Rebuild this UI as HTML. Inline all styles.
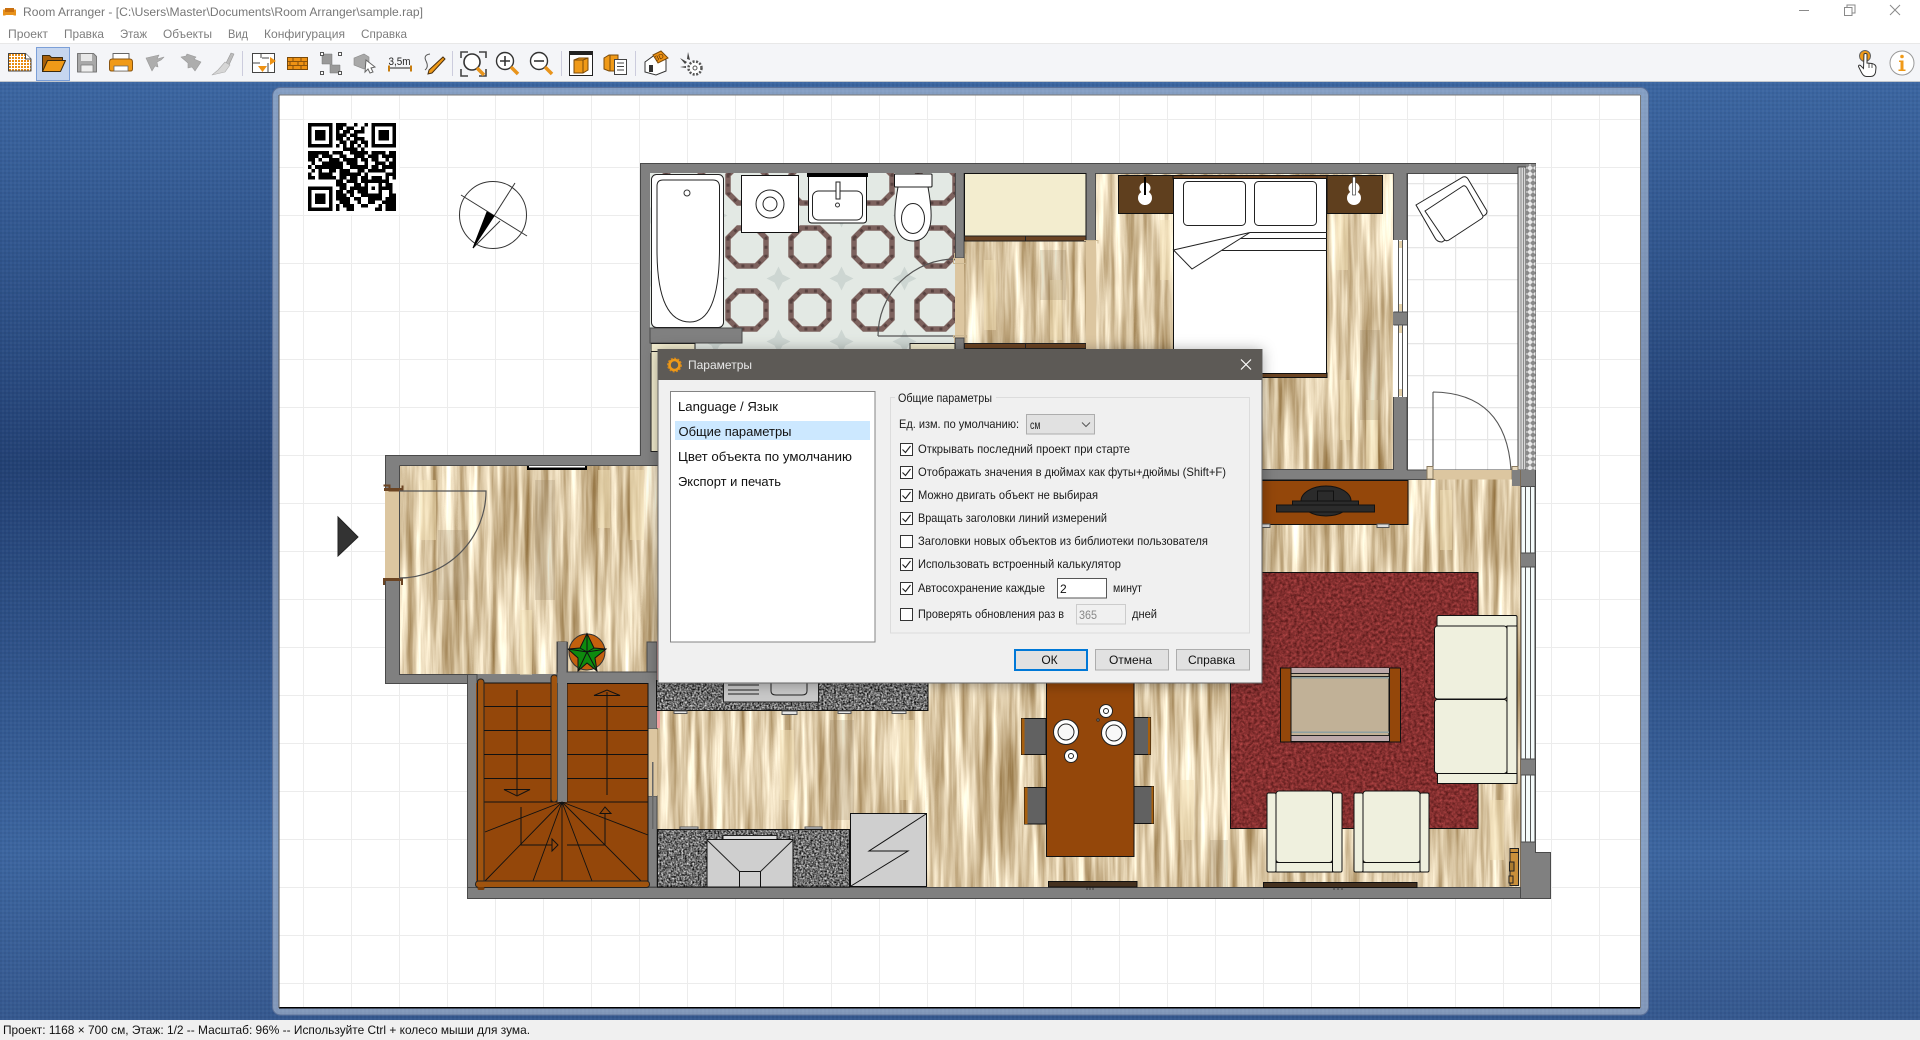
<!DOCTYPE html>
<html lang="ru"><head><meta charset="utf-8"><title>Room Arranger</title>
<style>
html,body{margin:0;padding:0;background:#fff;width:1920px;height:1040px;overflow:hidden}
svg{display:block}
text{font-family:"Liberation Sans","Noto Sans CJK JP",sans-serif;font-size:12px}
</style></head><body>
<svg xmlns="http://www.w3.org/2000/svg" width="1920" height="1040" viewBox="0 0 1920 1040">
<defs>
<linearGradient id="bg" gradientUnits="userSpaceOnUse" x1="0" y1="81" x2="0" y2="1020">
<stop offset="0" stop-color="#3c66a1"/><stop offset=".409" stop-color="#234174"/><stop offset=".821" stop-color="#3c659f"/><stop offset="1" stop-color="#36598f"/></linearGradient>
<pattern id="dots" width="4" height="4" patternUnits="userSpaceOnUse"><rect width="2" height="2" fill="#000" opacity=".05"/><rect x="2" y="2" width="2" height="2" fill="#fff" opacity=".03"/></pattern>
<pattern id="grid" x="303" y="119" width="48" height="48" patternUnits="userSpaceOnUse"><path d="M0 0H48M0 0V48" stroke="#ececec" stroke-width="2" fill="none"/></pattern>
<pattern id="btile" x="1423" y="183" width="32" height="32" patternUnits="userSpaceOnUse"><rect width="32" height="32" fill="#fff"/><path d="M0 0H32M0 0V32" stroke="#e6e6e6" stroke-width="2.4" fill="none"/></pattern>
<pattern id="otile" x="715.5" y="215.5" width="63" height="63" patternUnits="userSpaceOnUse"><rect width="63" height="63" fill="#e3e9e4"/>
<path d="M0 -12L4 -4L12 0L4 4L0 12L-4 4L-12 0L-4 -4Z" fill="#bcc6c2" opacity=".55"/><path d="M63 -12L67 -4L75 0L67 4L63 12L59 4L51 0L59 -4Z" fill="#bcc6c2" opacity=".55"/><path d="M0 51L4 59L12 63L4 67L0 75L-4 67L-12 63L-4 59Z" fill="#bcc6c2" opacity=".55"/><path d="M63 51L67 59L75 63L67 67L63 75L59 67L51 63L59 59Z" fill="#bcc6c2" opacity=".55"/>
<path d="M12.500 22.500L22.500 12.500H40.500L50.500 22.500V40.500L40.500 50.500H22.500L12.500 40.500Z" fill="none" stroke="#7d625e" stroke-width="5.500"/>
<path d="M12.500 22.500L22.500 12.500H40.500L50.500 22.500V40.500L40.500 50.500H22.500L12.500 40.500Z" fill="none" stroke="#4f3a38" stroke-width="3" stroke-dasharray="3 6" opacity=".8"/></pattern>
<pattern id="hatch" width="6" height="6" patternUnits="userSpaceOnUse"><rect width="6" height="6" fill="#e8e8e8"/><path d="M0 3L3 0L6 3L3 6Z" fill="#8a8a8a"/></pattern>
<pattern id="ordots" width="3" height="3" patternUnits="userSpaceOnUse"><rect width="3" height="3" fill="#fff"/><rect width="2" height="2" fill="#e88b10"/></pattern>
<filter id="wood" filterUnits="userSpaceOnUse" x="380" y="160" width="1160" height="740" color-interpolation-filters="sRGB">
<feTurbulence type="fractalNoise" baseFrequency="0.13 0.007" numOctaves="4" seed="7"/>
<feColorMatrix type="matrix" values=".72 0 0 0 .5  .85 0 0 0 .36  1.0 0 0 0 .15  0 0 0 0 1"/></filter>
<filter id="gran" filterUnits="userSpaceOnUse" x="650" y="680" width="290" height="215" color-interpolation-filters="sRGB">
<feTurbulence type="fractalNoise" baseFrequency=".55" numOctaves="2" seed="3"/>
<feColorMatrix type="matrix" values="1.4 0 0 0 -.27  1.4 0 0 0 -.27  1.4 0 0 0 -.27  0 0 0 0 1"/></filter>
<filter id="carp" filterUnits="userSpaceOnUse" x="1225" y="565" width="260" height="270" color-interpolation-filters="sRGB">
<feTurbulence type="fractalNoise" baseFrequency=".35" numOctaves="3" seed="5"/>
<feColorMatrix type="matrix" values=".5 0 0 0 .27  .25 0 0 0 .06  .25 0 0 0 .06  0 0 0 0 1"/></filter>
<filter id="shad" x="-10%" y="-10%" width="120%" height="120%"><feDropShadow dx="0" dy="1" stdDeviation="7" flood-color="#000" flood-opacity=".33"/></filter>
<clipPath id="wclip"><rect x="399" y="465" width="261" height="209"/><rect x="657" y="470" width="863" height="417"/><rect x="1096" y="173" width="297" height="300"/><rect x="964" y="236" width="132" height="110"/></clipPath>
</defs>

<!-- chrome -->
<rect width="1920" height="1040" fill="#fff"/>
<rect y="44" width="1920" height="38" fill="#f4f5f8"/><rect y="43" width="1920" height="1" fill="#e8e8e8"/><rect y="81" width="1920" height="1" fill="#c2c6cc"/>
<path d="M4 10h11v5H4z M3 9.500h2.500v6H3zM13.500 9.500h2.500v6h-2.500z" fill="#e8911a"/><rect x="5" y="8" width="9" height="4" fill="#c96f0e"/>
<text x="23" y="16" fill="#777" textLength="400" lengthAdjust="spacingAndGlyphs">Room Arranger - [C:\Users\Master\Documents\Room Arranger\sample.rap]</text>
<g fill="#7d7d7d">
<text x="8" y="38" textLength="40" lengthAdjust="spacingAndGlyphs">Проект</text>
<text x="64" y="38" textLength="40" lengthAdjust="spacingAndGlyphs">Правка</text>
<text x="120" y="38" textLength="27" lengthAdjust="spacingAndGlyphs">Этаж</text>
<text x="163" y="38" textLength="49" lengthAdjust="spacingAndGlyphs">Объекты</text>
<text x="228" y="38" textLength="20" lengthAdjust="spacingAndGlyphs">Вид</text>
<text x="264" y="38" textLength="81" lengthAdjust="spacingAndGlyphs">Конфигурация</text>
<text x="361" y="38" textLength="46" lengthAdjust="spacingAndGlyphs">Справка</text>
</g>
<g stroke="#8a8a8a" fill="none" stroke-width="1"><path d="M1799 10.500h10"/><path d="M1844.500 7.500h7.500v8h-7.500z"/><path d="M1847 7.500v-2.500h8v8h-3"/><path d="M1890 5l10 10M1900 5l-10 10"/></g>

<!-- toolbar icons -->
<rect x="36.500" y="47.500" width="33" height="33" fill="#c6d6ef" stroke="#7b9fd8"/>
<g stroke-linejoin="round">
<path d="M8.500 53.500h17l5.500 5.500v12h-22.500z" fill="url(#ordots)" stroke="#444"/><path d="M25.500 53.500v5.500h5.500" fill="#fff" stroke="#444"/>
<path d="M42.500 71.500v-16h7l2 2h11v3h-15l-4 11z" fill="#a85f08" stroke="#3a2a10"/><path d="M42.500 71.500l5-11h18l-5 11z" fill="#f09a18" stroke="#3a2a10"/>
<path d="M77.500 53.500h16l3 3v15.500h-19z" fill="#a8a8a8" stroke="#777"/><rect x="81" y="54" width="11" height="7" fill="#e8e8e8"/><rect x="81" y="65" width="12" height="7" fill="#eee" stroke="#777" stroke-width=".7"/>
<path d="M113 53.500h16v7h-16z" fill="#fff" stroke="#666"/><path d="M109.500 62q0-3 3-3h17q3 0 3 3v7q0 2-2 2h-19q-2 0-2-2z" fill="#f09a18" stroke="#8a5510"/><rect x="114" y="66" width="14" height="5" fill="#fff" stroke="#666" stroke-width=".8"/>
<path d="M146 58l13-3-2 4 7-2-3 3-4 2 1 5-3-1-3 5z" fill="#adadad" stroke="#999" stroke-width=".6"/>
<path d="M201 62l-6 9-3-4-4 1 0-5-7-6 5-1 1-2 9 3-2 2z" fill="#adadad" stroke="#999" stroke-width=".6"/>
<path d="M231 53l3 1-5 11-3-2z" fill="#bcbcbc" stroke="#999" stroke-width=".6"/><path d="M225 62l5 3-5 7-13 3 6-5z" fill="#d6d6d6" stroke="#aaa" stroke-width=".6"/>
</g>
<rect x="242" y="51" width="1" height="25" fill="#ccd"/>
<rect x="252.500" y="53.500" width="22" height="19" fill="#fff" stroke="#444"/><path d="M261 53v5M252 63h8M268 63v9M262 58h7" stroke="#444" fill="none"/><path d="M270 57l6 4-6 4z" fill="#ee9214"/><path d="M258 66h9l-4.500 6z" fill="#ee9214"/>
<rect x="287.500" y="57.500" width="20" height="12" fill="#ee9214" stroke="#7a4a0a"/><path d="M287 61.500h20M287 65.500h20M293 58v3M301 58v3M290 62v3M298 62v3M304 62v3M293 66v3M301 66v3" stroke="#6b3f08" fill="none" stroke-width=".8"/>
<path d="M322 54h10v11h8v8h-10v-9h-8z" fill="#999" stroke="#777" stroke-width=".5"/><g fill="#fff" stroke="#555"><rect x="320.500" y="52.500" width="3" height="3"/><rect x="338.500" y="52.500" width="3" height="3"/><rect x="320.500" y="71.500" width="3" height="3"/><rect x="338.500" y="71.500" width="3" height="3"/></g>
<path d="M354 58l10-4 5 3v9l-5 3-10-4z" fill="#a8a8a8" stroke="#888" stroke-width=".6"/><path d="M366 60l9 7-4 1 2 4-3 1-2-4-3 3z" fill="#fff" stroke="#666"/>
<text x="388.500" y="65" style="font-size:11px" fill="#222" textLength="22" lengthAdjust="spacingAndGlyphs">3,5m</text><path d="M389 68h22" stroke="#222" fill="none"/><path d="M389 65.500v6M411 65.500v6" stroke="#c77d10" stroke-width="2" fill="none"/>
<path d="M443 57l2 2-13 14-4 1 1-4z" fill="#f09a18" stroke="#4a3010"/><path d="M430 54q-7 1-4 7t-1 9" fill="none" stroke="#555"/>
<rect x="452" y="51" width="1" height="25" fill="#ccd"/>
<g fill="none" stroke="#444" stroke-width="1.600"><path d="M461 58v-6h7M479 52h7v6M461 69v7h7M486 69v7h-7"/><circle cx="472" cy="62" r="8" fill="#fff" stroke="#333"/></g><path d="M477 68l7 7" stroke="#e8941c" stroke-width="3.500"/>
<circle cx="505" cy="61" r="8.500" fill="#fff" stroke="#333" stroke-width="1.400"/><path d="M500 61h10M505 56v10" stroke="#333" stroke-width="1.600"/><path d="M511 67l7 7" stroke="#e8941c" stroke-width="3.500"/>
<circle cx="539" cy="61" r="8.500" fill="#fff" stroke="#333" stroke-width="1.400"/><path d="M534 61h10" stroke="#333" stroke-width="1.600"/><path d="M545 67l7 7" stroke="#e8941c" stroke-width="3.500"/>
<rect x="561" y="51" width="1" height="25" fill="#ccd"/>
<rect x="569.500" y="51.500" width="23" height="24" fill="#fff" stroke="#222"/><rect x="569" y="51" width="24" height="4" fill="#222"/><path d="M574 60l5-2h9v12l-5 3h-9z" fill="#f09a18" stroke="#7a4a0a"/><path d="M574 60h9l5-2M583 60v13" stroke="#7a4a0a" fill="none"/>
<path d="M604 58l5-3h9v16h-9l-5-2z" fill="#f09a18" stroke="#7a4a0a"/><path d="M610 55v16" stroke="#7a4a0a"/><rect x="614.500" y="59.500" width="12" height="15" fill="#fff" stroke="#444"/><path d="M617 63h7M617 66.500h7M617 70h7" stroke="#444"/>
<rect x="635" y="51" width="1" height="25" fill="#ccd"/>
<path d="M645 62l11-8 10 6v11l-10 4-11-3z" fill="#fff" stroke="#333"/><path d="M653 55l8-4 7 7-10 5z" fill="#ee9214" stroke="#7a4a0a"/><text x="656" y="61" style="font-size:7px" fill="#5a3306" transform="rotate(-22 656 61)">3D</text><rect x="649" y="65" width="4" height="7" fill="#333"/>
<g fill="#444"><path d="M688 52l2 8-3-1z"/><path d="M680 58l7 4-2 2z"/><path d="M680 67l6-1v2z"/></g><circle cx="695" cy="68" r="6.500" fill="#fff" stroke="#555" stroke-width="2.500" stroke-dasharray="2 1.500"/><circle cx="695" cy="68" r="2" fill="none" stroke="#555"/>
<!-- hand / info -->
<circle cx="1865" cy="56" r="5.500" fill="#f09a18" stroke="#666"/><path d="M1864 54q1.500-1 3 0v9l5 .5q4 1 4 4l-.500 5q-1 4-5 4h-4q-3 0-5-4l-3-6q0-2 2-1l3 3z" fill="#fff" stroke="#333"/><path d="M1869 63v5M1872 64v4" stroke="#333" stroke-width=".8"/>
<circle cx="1902" cy="63" r="12" fill="#fff" stroke="#999"/><circle cx="1902" cy="56.500" r="1.800" fill="#f09a18"/><path d="M1899 60.500h4.500v9h2v1.500h-7v-1.500h2v-7.500h-1.500z" fill="#f09a18"/>

<!-- workspace -->
<rect y="82" width="1920" height="938" fill="url(#bg)"/><rect y="82" width="1920" height="938" fill="url(#dots)"/>
<rect x="272.500" y="87.500" width="1376" height="927.500" rx="8" fill="#fff" fill-opacity=".38" stroke="#5c7199"/>
<rect x="279" y="95" width="1361" height="913" fill="#fff"/><rect x="279" y="95" width="1361" height="913" fill="url(#grid)"/>
<rect x="279" y="94.500" width="1361" height="1" fill="#777"/><rect x="279" y="1007" width="1361" height="1.500" fill="#000"/><rect x="278.500" y="95" width="1" height="913" fill="#555"/><rect x="1640" y="95" width="1" height="913" fill="#777"/>

<!-- QR -->
<g transform="translate(308 123) scale(3.52)" shape-rendering="crispEdges">
<rect x="-1" y="-1" width="27" height="27" fill="#fff"/>
<path fill-rule="evenodd" d="M0 0h7v7h-7zM1 1v5h5v-5zM2 2h3v3h-3z M18 0h7v7h-7zM19 1v5h5v-5zM20 2h3v3h-3z M0 18h7v7h-7zM1 19v5h5v-5zM2 20h3v3h-3z"/>
<path fill="none" stroke="#000" stroke-width="1" d="M8 .5h3M13 .5h1M16 .5h1M8 1.500h2M11 1.500h2M15 1.500h1M8 2.500h1M10 2.500h2M13 2.500h3M8 3.500h3M12 3.500h2M8 4.500h2M11 4.500h1M13 4.500h3M9 5.500h2M12 5.500h2M15 5.500h2M8 6.500h1M10 6.500h1M12 6.500h1M14 6.500h1M16 6.500h1M10 7.500h4M15 7.500h1M0 8.500h6M7 8.500h3M12 8.500h5M18 8.500h4M23 8.500h2M0 9.500h3M4 9.500h3M9 9.500h2M13 9.500h3M17 9.500h3M21 9.500h4M0 10.500h2M3 10.500h1M6 10.500h3M10 10.500h4M15 10.500h2M18 10.500h2M22 10.500h1M24 10.500h1M1 11.500h1M4 11.500h6M11 11.500h3M16 11.500h1M19 11.500h3M23 11.500h2M0 12.500h1M2 12.500h8M12 12.500h5M18 12.500h2M21 12.500h4M1 13.500h1M3 13.500h1M6 13.500h2M9 13.500h3M14 13.500h2M17 13.500h5M24 13.500h1M0 14.500h1M3 14.500h4M9 14.500h6M16 14.500h1M22 14.500h3M0 15.500h2M3 15.500h5M9 15.500h2M12 15.500h2M15 15.500h2M18 15.500h3M22 15.500h1M24 15.500h1M8 16.500h2M11 16.500h3M15 16.500h8M8 17.500h3M13 17.500h2M16 17.500h1M20 17.500h1M22 17.500h2M9 18.500h2M12 18.500h4M16 18.500h1M18 18.500h1M20 18.500h4M8 19.500h2M11 19.500h2M14 19.500h3M20 19.500h1M23 19.500h1M8 20.500h3M12 20.500h1M15 20.500h6M23 20.500h2M8 21.500h4M13 21.500h2M17 21.500h4M22 21.500h3M9 22.500h3M14 22.500h1M17 22.500h2M21 22.500h4M8 23.500h1M10 23.500h3M15 23.500h2M20 23.500h1M22 23.500h3M8 24.500h1M11 24.500h2M19 24.500h2M22 24.500h3"/>
</g>
<!-- compass -->
<g fill="none" stroke="#333"><circle cx="493" cy="215" r="33.500"/><path d="M461 195L527 236"/><path d="M515 183L494 216"/><path d="M500 221L473 248"/></g>
<path d="M473 248L487 212L494 216Z" fill="#000" stroke="#000"/>
<!-- entry arrow -->
<path d="M338 517L358 537L338 556Z" fill="#333" stroke="#222"/>

<!-- walls base -->
<path d="M640.500 163.500H1535.500V852.500H1550.500V898.500H467.500V683.500H385.500V455.500H640.500Z" fill="#808080" stroke="#4a4a4a"/>
<!-- wood floors -->
<rect x="380" y="160" width="1160" height="740" filter="url(#wood)" clip-path="url(#wclip)"/>
<g fill="#f3e2b8" opacity=".5"><rect x="598" y="470" width="12" height="58"/><rect x="630" y="470" width="14" height="70"/><rect x="520" y="610" width="12" height="65"/><rect x="1160" y="220" width="10" height="60"/><rect x="1336" y="210" width="12" height="60"/><rect x="1366" y="400" width="12" height="70"/><rect x="1340" y="380" width="10" height="60"/><rect x="420" y="480" width="16" height="60"/><rect x="1440" y="490" width="12" height="60"/><rect x="1180" y="780" width="14" height="60"/><rect x="900" y="720" width="14" height="80"/><rect x="984" y="260" width="12" height="70"/><rect x="1050" y="280" width="12" height="60"/><rect x="1490" y="800" width="14" height="60"/><rect x="780" y="730" width="14" height="70"/></g>
<g fill="#8d7a5e" opacity=".22"><rect x="535" y="480" width="20" height="120"/><rect x="1360" y="330" width="20" height="90"/><rect x="830" y="720" width="24" height="100"/><rect x="1210" y="840" width="18" height="47"/><rect x="1040" y="250" width="26" height="50"/><rect x="1240" y="500" width="20" height="50"/><rect x="438" y="530" width="30" height="70"/></g>

<!-- wall lines around floors -->
<g fill="#808080" stroke="#4a4a4a">
<path d="M399.500 465.500H660M399.500 465.500V674.500H477" fill="none"/>
<rect x="1095.500" y="173.500" width="298" height="296" fill="none"/>
<!-- stair walls -->
<rect x="557" y="642" width="10" height="160"/>
<rect x="647" y="642" width="10" height="32"/>
<rect x="557" y="672" width="100" height="11"/>
<rect x="467.500" y="674.500" width="9.500" height="213"/>
<rect x="648" y="683" width="9" height="46"/>
<rect x="648" y="796" width="9" height="91"/>
<rect x="467.500" y="887.500" width="1053" height="11"/>
<rect x="1262" y="469.500" width="173" height="10"/>
</g>
<rect x="557.500" y="672.500" width="99" height="11" fill="#808080"/>
<path d="M567.500 642V672.500H647" fill="none" stroke="#4a4a4a"/>
<rect x="648" y="729" width="9" height="67" fill="#dcc6a0"/>
<rect x="652" y="762" width="1.500" height="67" fill="#666"/>
<rect x="657" y="640" width="3" height="88" fill="#eea0a0"/>
<!-- entrance door -->
<rect x="385" y="491" width="14" height="87" fill="#dcc6a0"/>
<path d="M383.500 485.500h6v5h13v-5" fill="none" stroke="#6b4423" stroke-width="2"/><rect x="384" y="488" width="18" height="3" fill="#6b4423"/><rect x="384" y="578" width="18" height="3" fill="#6b4423"/><path d="M384 578v7M402 578v7" stroke="#6b4423" stroke-width="2"/>
<path d="M399 491H486A87 87 0 0 1 399 578" fill="none" stroke="#555" stroke-width="1.200"/>
<rect x="527" y="466" width="60" height="4" fill="#000"/><rect x="529" y="466" width="56" height="1.500" fill="#fff"/>
<!-- plant -->
<circle cx="587" cy="652" r="18" fill="#c3600d" stroke="#333"/>
<path d="M587 633.500L594 648L606 649L595 658L597 671L587 663L578 671L578 658L568 649L580 648Z" fill="#0e8a0e" stroke="#111"/><path d="M587 633.500V652M568 649L587 652L606 649M578 671L587 652L597 671M580 648L587 652M594 648L587 652" stroke="#111" fill="none"/>

<!-- bathroom -->
<rect x="650" y="173" width="305" height="180" fill="url(#otile)"/>
<rect x="650" y="328" width="92" height="15" fill="#808080" stroke="#4a4a4a"/>
<rect x="651.500" y="174.500" width="72" height="153" rx="5" fill="#fff" stroke="#222"/>
<path d="M663 180H713Q719 180 719.500 186V250Q719 322 690 322Q657 322 657 250V186Q657 180 663 180Z" fill="#fff" stroke="#222"/><circle cx="687" cy="193" r="3" fill="#fff" stroke="#333"/>
<rect x="741.500" y="175.500" width="57" height="57" fill="#fff" stroke="#111"/><circle cx="770" cy="204" r="14" fill="#fff" stroke="#222"/><circle cx="770" cy="204" r="7" fill="#fff" stroke="#222"/>
<rect x="808.500" y="174.500" width="58" height="48.500" rx="3" fill="#fff" stroke="#111"/><rect x="807" y="173" width="61" height="4" fill="#000"/>
<rect x="812.500" y="191" width="50" height="29" rx="6" fill="#fff" stroke="#222"/><rect x="836" y="182" width="4" height="17" fill="#fff" stroke="#222"/><circle cx="837.500" cy="205" r="2" fill="#fff" stroke="#333"/>
<rect x="894.500" y="174" width="37.500" height="13" rx="1" fill="#fff" stroke="#111"/>
<path d="M898 187H928Q933 215 930 226Q926 241 913 241Q900 241 896 226Q893 215 898 187Z" fill="#fff" stroke="#222"/><ellipse cx="913" cy="218.500" rx="11.500" ry="15" fill="#fff" stroke="#222"/>
<path d="M878 336H955M878 336V336A77 77 0 0 1 955 259" fill="none" stroke="#555" stroke-width="1.200"/>
<rect x="955" y="173" width="9" height="85" fill="#808080"/><path d="M955.500 173V258H964V173" fill="none" stroke="#4a4a4a"/>
<rect x="955" y="258" width="9" height="80" fill="#dcc6a0"/>
<rect x="955" y="338" width="9" height="14" fill="#808080" stroke="#4a4a4a"/>
<path d="M954.500 253v5.500h-1v5h13v-5h-1v-5" fill="none" stroke="#cbb792"/>
<path d="M954.500 343v-5.500h-1v-2h13v2h-1v5" fill="none" stroke="#cbb792"/>
<rect x="651" y="343.500" width="8" height="108" fill="#f3edcf" stroke="#222"/>
<rect x="651" y="343.500" width="44" height="8" fill="#f3edcf" stroke="#222"/><rect x="910" y="343.500" width="45" height="8" fill="#f3edcf" stroke="#222"/>
<!-- closets -->
<rect x="964.500" y="173.500" width="121.500" height="62.500" fill="#f3edcf" stroke="#111"/>
<rect x="964.500" y="236" width="121.500" height="5" fill="#6b4423" stroke="#222"/><path d="M1025.500 236v5" stroke="#222"/>
<rect x="964.500" y="343.500" width="121.500" height="5" fill="#6b4423" stroke="#222"/><path d="M1025.500 343v6" stroke="#222"/>
<rect x="1086" y="173" width="10" height="67" fill="#808080"/><path d="M1086.500 173V240M1095.500 173V240" stroke="#4a4a4a"/>
<rect x="1086" y="240" width="10" height="112" fill="#dcc6a0"/>
<path d="M1084 240.500h14v3" fill="none" stroke="#cbb792"/>
<!-- bedroom -->
<rect x="1118.500" y="175.500" width="55" height="38" fill="#5f3f1e" stroke="#111"/><rect x="1327" y="175.500" width="55.500" height="38" fill="#5f3f1e" stroke="#111"/>
<rect x="1173" y="175.500" width="154" height="3.500" fill="#6b4423" stroke="#111"/>
<rect x="1173" y="373" width="154" height="4.500" fill="#6b4423" stroke="#111"/>
<rect x="1173.500" y="178.500" width="153" height="195" fill="#fff" stroke="#111"/>
<rect x="1183.500" y="181.500" width="62" height="44" rx="4" fill="#fff" stroke="#222"/><rect x="1254.500" y="181.500" width="62" height="44" rx="4" fill="#fff" stroke="#222"/>
<path d="M1250 232.500H1327M1240 238.500H1327M1222 250.500H1327" fill="none" stroke="#222"/>
<path d="M1173.500 250L1250 232.500L1192 269Z" fill="#fff" stroke="#222"/>
<circle cx="1145" cy="198" r="7" fill="#fff"/><circle cx="1145" cy="188" r="5.500" fill="#fff"/><rect x="1144" y="177" width="2" height="18" fill="#000"/>
<circle cx="1354" cy="198" r="7" fill="#fff"/><circle cx="1354" cy="188" r="5.500" fill="#fff"/><rect x="1352.500" y="177" width="3" height="18" fill="#fff" stroke="#222" stroke-width=".6"/>
<!-- bedroom right wall/windows -->
<rect x="1393" y="173" width="14" height="67" fill="#808080"/><rect x="1393" y="312" width="14" height="13" fill="#808080"/><rect x="1393" y="397" width="14" height="82" fill="#808080"/>
<g fill="#fff"><rect x="1393" y="240" width="14" height="72"/><rect x="1393" y="325" width="14" height="72"/></g>
<path d="M1398.500 240V312M1402.500 240V312M1398.500 325V397M1402.500 325V397" stroke="#555" fill="none"/><g fill="#e6d2aa"><rect x="1399" y="241" width="3" height="7"/><rect x="1399" y="304" width="3" height="7"/><rect x="1399" y="326" width="3" height="7"/><rect x="1399" y="389" width="3" height="7"/></g>
<path d="M1393.500 173V240M1407 173V240M1393.500 312H1407M1393.500 325H1407M1393.500 397V470M1407 397V470" stroke="#4a4a4a" fill="none"/>
<!-- balcony -->
<rect x="1407.500" y="173.500" width="111" height="296.500" fill="url(#btile)" stroke="#4a4a4a"/>
<rect x="1518" y="167" width="8" height="303" fill="#d8d8d8" stroke="#444"/><path d="M1521 167V470M1523.500 167V470" stroke="#8c8c8c"/>
<rect x="1526" y="164" width="9.500" height="306" fill="url(#hatch)"/>
<path d="M1416 205L1463 177Q1466 176 1468 179L1487 211Q1487 214 1485 215L1442 242Q1437 242 1435 238Z" fill="#fff" stroke="#222"/>
<path d="M1425 211L1463 186Q1465 185 1467 188L1483 216Q1483 218 1481 219L1449 240Q1446 242 1444 239Z" fill="#fff" stroke="#222"/>
<path d="M1433 392V470M1433 392Q1506 393 1511 470" fill="none" stroke="#555" stroke-width="1.100"/>
<rect x="1433" y="470" width="80" height="9.500" fill="#dcc6a0"/>
<path d="M1427 466.500h6v12.500h-6zM1512 466.500h6v12.500h-6z" fill="#e8d9bd" stroke="#8a7a60"/>
<!-- right windows -->
<g fill="#f4fbfb" stroke="#4a4a4a"><rect x="1521" y="486.500" width="14" height="66.500"/><rect x="1521" y="567" width="14" height="192"/><rect x="1521" y="775" width="14" height="67"/></g>
<path d="M1525.500 486V553M1530.500 486V553M1525.500 567V759M1530.500 567V759M1525.500 775V842M1530.500 775V842" stroke="#555" fill="none"/>
<rect x="1512" y="470" width="23" height="16" fill="#808080"/>
<path d="M1520.500 470V887" stroke="#7a6a55"/>
<!-- TV stand -->
<rect x="1250" y="480.500" width="158" height="44" fill="#94470a" stroke="#111"/>
<rect x="1262" y="524" width="8" height="3.500" fill="#ddd" stroke="#555"/><rect x="1377" y="524" width="12" height="3.500" fill="#ddd" stroke="#555"/>
<ellipse cx="1326" cy="501" rx="25" ry="15" fill="#2b2b2b" stroke="#111"/><rect x="1276.500" y="505" width="98" height="7" fill="#2b2b2b" stroke="#111"/><rect x="1292.500" y="501" width="66" height="4" fill="#2b2b2b" stroke="#111"/><rect x="1317.500" y="491" width="16" height="10" fill="#2b2b2b" stroke="#111"/>
<!-- carpet -->
<rect x="1225" y="565" width="260" height="270" filter="url(#carp)" clip-path="inset(7px 7px 7px 5px)"/>
<path d="M1230.500 572.500H1478V828.500H1230.500Z" fill="none" stroke="#111"/>
<!-- coffee table -->
<rect x="1291" y="668" width="98" height="74" fill="#c1b197" stroke="#111"/>
<rect x="1291" y="668" width="98" height="5" fill="#bca9aa"/><path d="M1291 673.500H1389M1291 676.500H1389" stroke="#222"/><rect x="1291" y="677" width="98" height="1.500" fill="#8fa0a0"/>
<rect x="1291" y="736" width="98" height="6" fill="#bca9aa"/><path d="M1291 735.500H1389" stroke="#222"/><rect x="1291" y="731.500" width="98" height="1.500" fill="#8fa0a0"/><path d="M1291 741.500H1389" stroke="#111"/>
<rect x="1280.500" y="668" width="10.500" height="74" fill="#94470a" stroke="#111"/><rect x="1389.500" y="668" width="11" height="74" fill="#94470a" stroke="#111"/>
<!-- sofa -->
<g fill="#eff0de" stroke="#111">
<rect x="1437" y="615.500" width="80" height="11" rx="1.500"/>
<rect x="1507" y="626" width="10" height="148"/>
<rect x="1437.500" y="773.500" width="79.500" height="10"/>
<rect x="1434.500" y="626" width="72.500" height="73" rx="3"/>
<rect x="1434.500" y="699.500" width="72.500" height="74" rx="3"/>
<!-- armchairs -->
<rect x="1267" y="793" width="9" height="79" rx="1.500"/><rect x="1332.500" y="793" width="9.500" height="79" rx="1.500"/><rect x="1276" y="862.500" width="56.500" height="9.500"/><rect x="1276" y="791" width="56.500" height="71.500" rx="3"/>
<rect x="1354" y="793" width="9" height="79" rx="1.500"/><rect x="1420" y="793" width="9" height="79" rx="1.500"/><rect x="1363" y="862.500" width="57" height="9.500"/><rect x="1363" y="791" width="57" height="71.500" rx="3"/>
</g>
<!-- dining -->
<rect x="1021.500" y="718.500" width="24.500" height="36" fill="#616161" stroke="#111"/><rect x="1021.500" y="718.500" width="3" height="36" fill="#a85f0d"/>
<rect x="1024.500" y="787.500" width="21.500" height="36.500" fill="#616161" stroke="#111"/><rect x="1024.500" y="787.500" width="3" height="36.500" fill="#a85f0d"/>
<rect x="1134" y="717.500" width="16.500" height="37" fill="#616161" stroke="#111"/><rect x="1148" y="717.500" width="2.500" height="37" fill="#a85f0d"/>
<rect x="1134" y="786.500" width="19.500" height="37" fill="#616161" stroke="#111"/><rect x="1151.500" y="786.500" width="2" height="37" fill="#a85f0d"/>
<rect x="1046.500" y="660" width="87.500" height="196.500" fill="#94470a" stroke="#111"/>
<g fill="#fff" stroke="#222"><circle cx="1066" cy="732" r="12.500"/><circle cx="1066" cy="732" r="8" fill="#f8f8f8"/><circle cx="1114" cy="733" r="12.500"/><circle cx="1114" cy="733" r="8" fill="#f8f8f8"/><circle cx="1106" cy="711" r="6.500"/><circle cx="1106" cy="711" r="2.500"/><circle cx="1071" cy="756" r="6.500"/><circle cx="1071" cy="756" r="2.500"/></g><circle cx="1098" cy="720" r="1.500" fill="#555" stroke="#222" stroke-width=".5"/>
<rect x="1048.500" y="881.500" width="88.500" height="5.500" fill="#45311f" stroke="#111"/><rect x="1263.500" y="882.500" width="153.500" height="5" fill="#45311f" stroke="#111"/>
<path d="M1087 887v3M1090 887v3M1093 887v3M1334 887v3M1338 887v3M1342 887v3" stroke="#222" stroke-width=".7"/>
<rect x="1510" y="848.500" width="8.500" height="37" fill="#c98f3a" stroke="#222"/><rect x="1509" y="876" width="4" height="7" fill="#c98f3a" stroke="#222"/><path d="M1510 852.500h8.500" stroke="#222"/><rect x="1509.500" y="862" width="4.500" height="9" fill="#a97a30" stroke="#222"/>
<!-- kitchen -->
<rect x="650" y="680" width="290" height="215" filter="url(#gran)" clip-path="inset(0 12px 185px 7px)"/>
<path d="M656.500 680V710.500H928V680" fill="none" stroke="#111"/><path d="M818 702V710" stroke="#222"/>
<rect x="723.500" y="680" width="95" height="22" fill="#c9c9c9" stroke="#222"/><path d="M728 685h31M728 690h31M728 694h31" stroke="#222" fill="none"/><path d="M771 683v8q0 4 5 4h26q5 0 5-4v-8" fill="#c9c9c9" stroke="#222"/>
<g fill="#e4e4e4" stroke="#555"><rect x="674" y="711" width="13" height="2.500"/><rect x="782" y="711" width="15" height="3.500"/><rect x="838" y="711" width="13" height="2.500"/><rect x="892" y="711" width="14" height="2.500"/><rect x="680" y="827" width="18" height="2"/><rect x="805" y="827" width="17" height="2"/></g>
<rect x="650" y="680" width="290" height="215" filter="url(#gran)" clip-path="inset(149px 91px 8px 7px)"/>
<path d="M657.500 829.500H849.500V887H657.500Z" fill="none" stroke="#111"/>
<rect x="723" y="835.500" width="54" height="4" fill="#ddd" stroke="#222"/>
<rect x="707" y="839.500" width="86" height="47.500" fill="#cfcfcf" stroke="#111"/><rect x="739.500" y="871.500" width="21" height="15.500" fill="#cfcfcf" stroke="#111"/><path d="M707 840L739.500 871.500M793 840L760.500 871.500" stroke="#222" fill="none"/>
<rect x="850.500" y="813.500" width="76" height="73" fill="#cfcfcf" stroke="#111"/><path d="M851 886L908 851H869L926 814" fill="none" stroke="#111"/>
<!-- stairs -->
<rect x="476" y="683" width="172" height="204" fill="#94470a"/>
<rect x="484" y="683" width="67" height="119" fill="#94470a" stroke="#111"/><rect x="567" y="683.500" width="81" height="118.500" fill="#94470a" stroke="#111"/>
<rect x="484" y="802" width="164" height="79" fill="#94470a" stroke="#111"/>
<rect x="477.500" y="679" width="6.500" height="208" rx="3" fill="#a0540f" stroke="#222"/>
<rect x="551" y="675" width="6.500" height="127" rx="3" fill="#a0540f" stroke="#222"/>
<rect x="557" y="642" width="10" height="160" fill="#808080"/>
<path d="M557.500 642V802M567 642V683" stroke="#4a4a4a" fill="none"/>
<rect x="557.500" y="672.500" width="89.500" height="10.500" fill="#808080"/>
<path d="M484 706.500H551M484 730.500H551M484 754.500H551M484 778.500H551M567 706.500H648M567 730.500H648M567 754.500H648M567 778.500H648" stroke="#111" fill="none"/>
<path d="M517 690V795M504 789.500H530L517 796Z M607 692V795M594 695.500H620L607 690Z" fill="none" stroke="#111"/>
<path d="M562 802L485 832M562 802L485 881M562 802L533 881M562 802V881M562 802L592 881M562 802L641 881M562 802L648 835" stroke="#111" fill="none" stroke-width=".9"/>
<path d="M521 807V845H552M552 839V851L558 845Z M567 845H605V813M600 813.500H611L605 807Z" stroke="#111" fill="none"/>
<rect x="475.500" y="881" width="174" height="6.500" rx="3" fill="#a0540f" stroke="#222"/>
<rect x="477.500" y="887" width="7" height="3" rx="1.500" fill="#7a3d08"/>

<!-- dialog -->
<g filter="url(#shad)"><rect x="658" y="349.500" width="604" height="333.500" fill="#f0f0f0" stroke="#666"/></g>
<rect x="658" y="349" width="604" height="31" fill="#5d5a56"/>
<circle cx="674.500" cy="365" r="5" fill="none" stroke="#f09a18" stroke-width="2.600"/><circle cx="674.500" cy="365" r="6.800" fill="none" stroke="#d98a18" stroke-width="1.200" stroke-dasharray="2 1.500"/>
<text x="688" y="369" fill="#e9e9e9" textLength="64" lengthAdjust="spacingAndGlyphs">Параметры</text>
<path d="M1241 359.500l10 10M1251 359.500l-10 10" stroke="#fff" stroke-width="1.200" fill="none"/>
<rect x="670.500" y="391.500" width="204.500" height="250.500" fill="#fff" stroke="#838383"/>
<rect x="675" y="421" width="195" height="19" fill="#cce8ff"/>
<g fill="#111" style="font-size:13px">
<text x="678" y="411" style="font-size:13px" textLength="100" lengthAdjust="spacingAndGlyphs">Language / Язык</text>
<text x="678.500" y="436" style="font-size:13px" textLength="113" lengthAdjust="spacingAndGlyphs">Общие параметры</text>
<text x="678" y="461" style="font-size:13px" textLength="174" lengthAdjust="spacingAndGlyphs">Цвет объекта по умолчанию</text>
<text x="678" y="486" style="font-size:13px" textLength="103" lengthAdjust="spacingAndGlyphs">Экспорт и печать</text>
</g>
<rect x="890.500" y="397.500" width="359" height="235.500" fill="none" stroke="#dcdcdc"/>
<rect x="895" y="392" width="101" height="12" fill="#f0f0f0"/>
<g fill="#1a1a1a" style="font-size:12px">
<text x="898" y="402" textLength="94" lengthAdjust="spacingAndGlyphs">Общие параметры</text>
<text x="899" y="428" textLength="120" lengthAdjust="spacingAndGlyphs">Ед. изм. по умолчанию:</text>
<text x="918" y="453" textLength="212" lengthAdjust="spacingAndGlyphs">Открывать последний проект при старте</text>
<text x="918" y="476" textLength="308" lengthAdjust="spacingAndGlyphs">Отображать значения в дюймах как футы+дюймы (Shift+F)</text>
<text x="918" y="499" textLength="180" lengthAdjust="spacingAndGlyphs">Можно двигать объект не выбирая</text>
<text x="918" y="522" textLength="189" lengthAdjust="spacingAndGlyphs">Вращать заголовки линий измерений</text>
<text x="918" y="545" textLength="290" lengthAdjust="spacingAndGlyphs">Заголовки новых объектов из библиотеки пользователя</text>
<text x="918" y="568" textLength="203" lengthAdjust="spacingAndGlyphs">Использовать встроенный калькулятор</text>
<text x="918" y="592" textLength="127" lengthAdjust="spacingAndGlyphs">Автосохранение каждые</text>
<text x="1113" y="592" textLength="29" lengthAdjust="spacingAndGlyphs">минут</text>
<text x="918" y="618" textLength="146" lengthAdjust="spacingAndGlyphs">Проверять обновления раз в</text>
<text x="1132" y="618" textLength="25" lengthAdjust="spacingAndGlyphs">дней</text>
</g>
<rect x="1026.500" y="414.500" width="68" height="19.500" fill="#e1e1e1" stroke="#adadad"/>
<text x="1030" y="429" fill="#222" textLength="10.500" lengthAdjust="spacingAndGlyphs">см</text>
<path d="M1082 422.500l4 4 4-4" fill="none" stroke="#555"/>
<g fill="#fff" stroke="#333"><rect x="900.500" y="443.500" width="12" height="12"/><rect x="900.500" y="466.500" width="12" height="12"/><rect x="900.500" y="489.500" width="12" height="12"/><rect x="900.500" y="512.500" width="12" height="12"/><rect x="900.500" y="535.500" width="12" height="12"/><rect x="900.500" y="558.500" width="12" height="12"/><rect x="900.500" y="582.500" width="12" height="12"/><rect x="900.500" y="608.500" width="12" height="12"/></g>
<path d="M902.500 449.500l3 3 5-6.500M902.500 472.500l3 3 5-6.500M902.500 495.500l3 3 5-6.500M902.500 518.500l3 3 5-6.500M902.500 564.500l3 3 5-6.500M902.500 588.500l3 3 5-6.500" fill="none" stroke="#222" stroke-width="1.100"/>
<rect x="1057.500" y="578.500" width="49" height="19.500" fill="#fff" stroke="#555"/>
<text x="1060" y="593" fill="#111">2</text>
<rect x="1076.500" y="604.500" width="49" height="19.500" fill="#f0f0f0" stroke="#ccc"/>
<text x="1079" y="619" fill="#888" textLength="18" lengthAdjust="spacingAndGlyphs">365</text>
<rect x="1015" y="650" width="72" height="20" fill="#e1e1e1" stroke="#0078d7" stroke-width="2"/>
<rect x="1095.500" y="649.500" width="73" height="20.500" fill="#e1e1e1" stroke="#adadad"/>
<rect x="1176.500" y="649.500" width="73" height="20.500" fill="#e1e1e1" stroke="#adadad"/>
<g fill="#111" text-anchor="middle"><text x="1049.500" y="664">ОК</text><text x="1130.500" y="664">Отмена</text><text x="1211.500" y="664">Справка</text></g>

<!-- status -->
<rect y="1020" width="1920" height="20" fill="#f0f0f0"/>
<text x="3" y="1034" fill="#111" textLength="527" lengthAdjust="spacingAndGlyphs">Проект: 1168 × 700 см, Этаж: 1/2 -- Масштаб: 96% -- Используйте Ctrl + колесо мыши для зума.</text>
</svg>
</body></html>
